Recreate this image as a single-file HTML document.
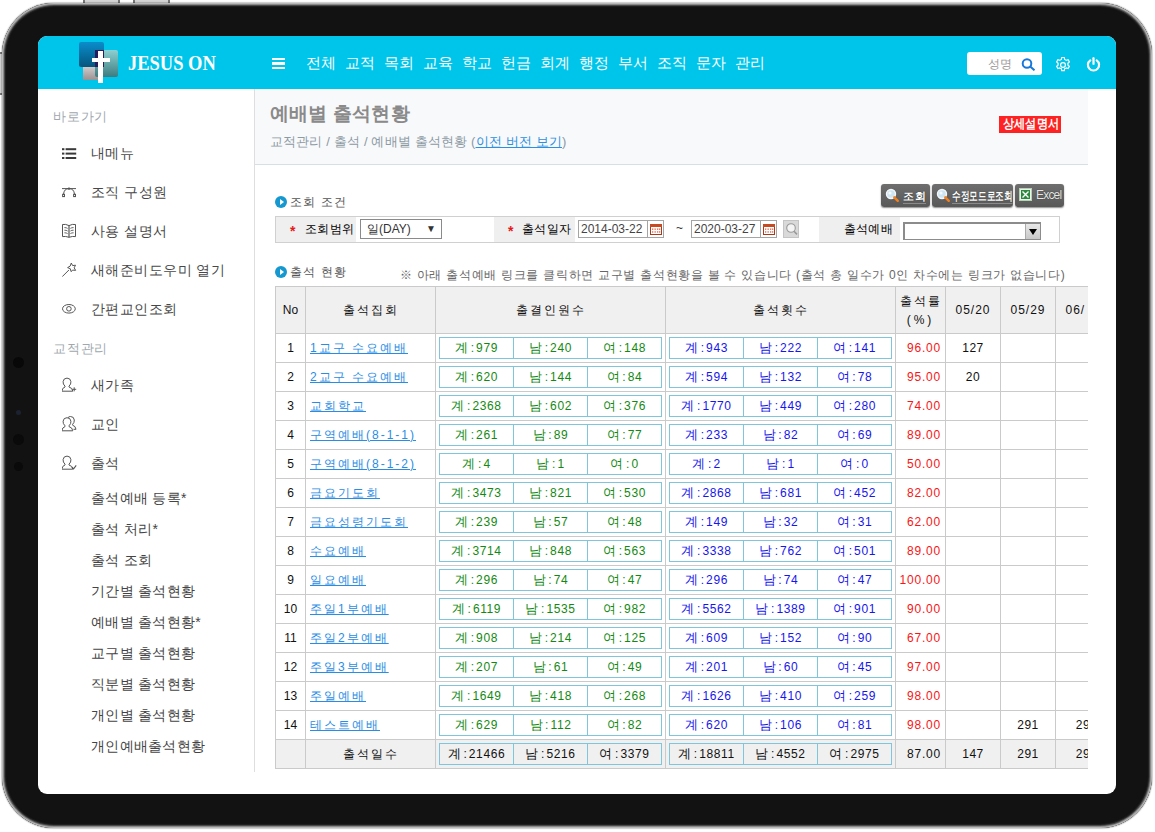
<!DOCTYPE html>
<html><head><meta charset="utf-8">
<style>
*{box-sizing:border-box}
html,body{margin:0;padding:0}
body{width:1155px;height:832px;overflow:hidden;background:#fff;position:relative;font-family:"Liberation Sans",sans-serif}
.btn-out{position:absolute;background:linear-gradient(90deg,#777 0 2px,#d4d4d4 2px calc(100% - 2px),#777 calc(100% - 2px))}
.btn-out.v{background:linear-gradient(#777 0 2px,#d4d4d4 2px calc(100% - 2px),#777 calc(100% - 2px))}
.frame{position:absolute;left:2px;top:3px;width:1150px;height:825px;border-radius:52px;background:#121212;box-shadow:0 0 1px 0.5px rgba(0,0,0,.2), inset 0 0 0 1px #b8b8b8, inset 0 0 0 2px #8a8a8a, inset 0 0 0 3px #4a4a4a, inset 0 0 1px 4px #222}
.screen{position:absolute;left:38px;top:36px;width:1078px;height:758px;border-radius:9px;overflow:hidden;background:#fff}
.nav{position:absolute;left:0;top:0;width:1078px;height:53px;background:#00c5ea}
.logo .sq{position:absolute}
.brand{position:absolute;left:90px;top:14px;font-family:"Liberation Serif",serif;color:#fff;font-size:22px;font-weight:bold;letter-spacing:0px;white-space:nowrap;transform-origin:0 0;transform:scaleX(0.84)}
.hamb{position:absolute;left:234px;top:22px;width:13px;height:11px}
.hamb i{position:absolute;left:0;width:13px;height:2.4px;background:#fff}
.menu span{position:absolute;top:17px;color:#fff;font-size:14.5px;white-space:nowrap;line-height:20px}
.sbox{position:absolute;left:929px;top:16px;width:75px;height:23px;background:#fff;border-radius:3px}
.sbox .ph{position:absolute;left:21px;top:4px;font-size:12px;color:#999}
.side{position:absolute;left:0;top:53px;width:217px;height:683px;border-right:1px solid #dedede}
.sh{position:absolute;left:15px;margin-top:1.5px;font-size:13px;color:#a0a8ae;white-space:nowrap;line-height:16px;letter-spacing:0.8px}
.si{position:absolute;left:0;height:20px;white-space:nowrap}
.si .ico{position:absolute;left:24px;top:2px;width:16px;height:16px;line-height:0}
.si .st{position:absolute;left:53px;top:0;font-size:14px;line-height:20px;color:#484848;letter-spacing:0.45px}
.ss{position:absolute;left:53px;font-size:14px;line-height:18px;color:#444;white-space:nowrap;letter-spacing:0.3px}
.content{position:absolute;left:217px;top:53px;width:833px;height:705px;overflow:hidden}
.phead{position:absolute;left:0;top:0;width:833px;height:76px;background:#f8f9fb;border-bottom:1px solid #d5e0e6}
.ptitle{position:absolute;left:15px;top:12px;font-size:19px;font-weight:bold;color:#8a8a8a;white-space:nowrap;letter-spacing:0.2px}
.bread{position:absolute;left:15px;top:44px;font-size:13px;color:#8c9aa3;white-space:nowrap;letter-spacing:0.15px}
.bread a{color:#2d8fe0;text-decoration:underline}
.badge{position:absolute;left:744px;top:27px;width:62px;height:17px;background:#fe2222;color:#fff;font-weight:bold;font-size:12.5px;line-height:17px;white-space:nowrap;overflow:hidden}
.badge span{position:absolute;left:4px;top:0;transform-origin:0 0;transform:scaleX(0.86)}
.sec{position:absolute;left:20px;font-size:12px;color:#555;white-space:nowrap;letter-spacing:0.5px;word-spacing:2.5px}
.sec .dot{position:absolute;left:0;top:1px;width:12px;height:12px;border-radius:50%;background:#1598d0}
.sec .dot:after{content:"";position:absolute;left:4.5px;top:3px;border-left:4px solid #fff;border-top:3px solid transparent;border-bottom:3px solid transparent}
.sec span.t{position:absolute;left:15px;top:0;line-height:14px}
.gbtn{position:absolute;top:95px;height:23px;border-radius:3px;background:linear-gradient(#6e6e6e,#585858);box-shadow:0 1px 1.5px rgba(0,0,0,.45);color:#fff;white-space:nowrap}
.gbtn .bt{position:absolute;top:5px;font-size:12px;line-height:14px;font-weight:bold;text-shadow:0 0 1px #222;border-bottom:1px solid #8a8a8a}
.star{position:absolute;top:1.5px;color:#e41a1a;font-weight:bold;font-size:14px}
.stbl{position:absolute;left:20px;top:127px;width:785px;height:27px;border:1px solid #d0d0d0;background:#fff}
.stbl .lb{position:absolute;top:0;height:25px;background:#efefef;font-size:12px;color:#000;line-height:25px;white-space:nowrap}
.inp{position:absolute;border:1px solid #a5a5a5;background:#fff;font-size:12px;color:#333;white-space:nowrap}
.note{position:absolute;left:145px;top:178px;font-size:12px;color:#666;white-space:nowrap;letter-spacing:0.7px;word-spacing:0px}
table.main{position:absolute;left:20px;top:197px;border-collapse:collapse;table-layout:fixed;width:805px}
table.main td,table.main th{border:1px solid #cacaca;padding:0;height:29px;font-size:12px;color:#111;text-align:center;white-space:nowrap;overflow:hidden}
table.main th{background:#f0f0f0;font-weight:normal;height:47px;letter-spacing:2px}
table.main td.nm{text-align:left;padding-left:4px;letter-spacing:2px}
table.main td.nm a{color:#2a8de4;text-decoration:underline}
table.main td.rt{color:#fa1414;text-align:right;padding-right:4px;letter-spacing:0.8px}
table.main td.rt2{text-align:right;padding-right:4px;letter-spacing:0.8px}
table.main td.bx{padding:0 3px}
table.main td.d{letter-spacing:0.5px}
table.main tr.tot td{background:#f0f0f0}
table.main td.nm2{letter-spacing:2px}
table.in{border-collapse:collapse;width:223px;table-layout:fixed;margin:0 auto}
table.in td{border:1px solid #7fc6dc;height:21px;font-size:12px;background:#fff;letter-spacing:0.6px;padding:0}
table.in b{font-weight:normal;font-size:13px}
table.in i{font-style:normal;margin:0 1.5px 0 2px}
table.in.g td{color:#128a12}
table.in.b td{color:#1616ee}
table.in.k td{color:#111;background:#f0f0f0}
</style></head><body>
<div class="btn-out" style="left:83px;top:0;width:37px;height:3px"></div>
<div class="btn-out" style="left:133px;top:0;width:37px;height:3px"></div>
<div class="btn-out v" style="left:0;top:52px;width:3px;height:43px"></div>
<div class="frame"></div>
<div style="position:absolute;left:13px;top:357px;width:11px;height:11px;border-radius:50%;background:#080808"></div>
<div style="position:absolute;left:16px;top:410px;width:5px;height:5px;border-radius:50%;background:#1c2330"></div>
<div style="position:absolute;left:13px;top:434px;width:11px;height:11px;border-radius:50%;background:#0a0a0a"></div>
<div style="position:absolute;left:14px;top:462px;width:9px;height:9px;border-radius:50%;background:#0a0a0a"></div>
<div class="screen">
 <div class="nav">
  <div class="logo">
   <div class="sq" style="left:41px;top:6px;width:25px;height:25px;border-radius:2px;background:linear-gradient(#0a8dcc,#05557c)"></div>
   <div class="sq" style="left:45px;top:31px;width:16px;height:13px;background:linear-gradient(#cfc9c9,#9a9292)"></div>
   <div class="sq" style="left:57px;top:14px;width:23px;height:27px;border-radius:2px;background:linear-gradient(#8ed0d2,#3c7c80)"></div>
   <div class="sq" style="left:57px;top:14px;width:9px;height:17px;background:#2a1c5c"></div>
   <div class="sq" style="left:60px;top:15px;width:5px;height:32px;background:#fff"></div>
   <div class="sq" style="left:54px;top:22px;width:18px;height:4px;background:#fff"></div>
  </div>
  <div class="brand">JESUS ON</div>
  <div class="hamb"><i style="top:0"></i><i style="top:4.3px"></i><i style="top:8.6px"></i></div>
  <div class="menu"><span style="left:268px">전체</span><span style="left:307px">교적</span><span style="left:346px">목회</span><span style="left:385px">교육</span><span style="left:424px">학교</span><span style="left:463px">헌금</span><span style="left:502px">회계</span><span style="left:541px">행정</span><span style="left:580px">부서</span><span style="left:619px">조직</span><span style="left:658px">문자</span><span style="left:697px">관리</span></div>
  <div class="sbox"><span class="ph">성명</span>
   <svg style="position:absolute;left:54px;top:6px" width="15" height="13" viewBox="0 0 15 13" fill="none" stroke="#1878da" stroke-width="2"><circle cx="6" cy="5.5" r="4.3"/><path d="M9.2 8.6 L13.5 12.3"/></svg>
  </div>
  <svg style="position:absolute;left:1015.5px;top:19.5px" width="18" height="18" viewBox="0 0 24 24" fill="none" stroke="#fff" stroke-width="1.6"><path d="M10.3 2 h3.4 l.5 2.6 a8 8 0 0 1 2.1 1.2 l2.5-.9 1.7 2.9 -2 1.8 a8 8 0 0 1 0 2.4 l2 1.8 -1.7 2.9 -2.5-.9 a8 8 0 0 1 -2.1 1.2 l-.5 2.6 h-3.4 l-.5-2.6 a8 8 0 0 1 -2.1-1.2 l-2.5.9 -1.7-2.9 2-1.8 a8 8 0 0 1 0-2.4 l-2-1.8 1.7-2.9 2.5.9 a8 8 0 0 1 2.1-1.2 z"/><circle cx="12" cy="12" r="3.2"/></svg>
  <svg style="position:absolute;left:1048px;top:21px" width="15" height="15" viewBox="0 0 15 15" fill="none" stroke="#fff" stroke-width="2.2" stroke-linecap="round"><path d="M4.3 3.3 A5.6 5.6 0 1 0 10.7 3.3"/><path d="M7.5 1.2 V7"/></svg>
 </div>
 <div class="side"><div class="sh" style="top:18px">바로가기</div>
<div class="si" style="top:54px"><span class="ico"><svg width="16" height="16" viewBox="0 0 16 16"><g fill="#3a3a3a"><rect x="0" y="3.2" width="2.4" height="2"/><rect x="3.6" y="3.2" width="10.6" height="2"/><rect x="0" y="7.6" width="2.4" height="2"/><rect x="3.6" y="7.6" width="10.6" height="2"/><rect x="0" y="12" width="2.4" height="2"/><rect x="3.6" y="12" width="10.6" height="2"/></g></svg></span><span class="st">내메뉴</span></div>
<div class="si" style="top:93px"><span class="ico"><svg width="16" height="16" viewBox="0 0 16 16" fill="none" stroke="#555" stroke-width="1"><path d="M0 4.6 H14"/><path d="M1.5 10.3 Q2 4.6 7 4.6 Q12 4.6 12.5 10.3"/><rect x="0.6" y="10.3" width="1.9" height="2.3" fill="#fff"/><rect x="11.6" y="10.3" width="1.9" height="2.3" fill="#fff"/><circle cx="7" cy="4.6" r="0.8" fill="#555"/></svg></span><span class="st">조직 구성원</span></div>
<div class="si" style="top:132px"><span class="ico"><svg width="16" height="16" viewBox="0 0 16 16" fill="none" stroke="#555" stroke-width="1"><path d="M0.5 1.5 Q3.5 0.8 7 2.6 Q10.5 0.8 13.5 1.5 V13.6 Q10.5 13 7 14.3 Q3.5 13 0.5 13.6 Z"/><path d="M7 2.6 V14.3" stroke-width="1.2"/><path d="M2.4 4.6 Q4.3 4.5 5.6 5.4 M2.4 7.2 Q4.3 7.1 5.6 8 M2.4 9.8 Q4.3 9.7 5.6 10.6 M11.6 4.6 Q9.7 4.5 8.4 5.4 M11.6 7.2 Q9.7 7.1 8.4 8 M11.6 9.8 Q9.7 9.7 8.4 10.6" stroke-width="0.9"/></svg></span><span class="st">사용 설명서</span></div>
<div class="si" style="top:171px"><span class="ico"><svg width="16" height="16" viewBox="0 0 16 16" fill="none" stroke="#555" stroke-width="1"><path d="M0.3 14.6 L7 7.9"/><path d="M9.3 1 L10.6 3.6 L13.5 3.2 L12.2 5.8 L13.6 8.4 L10.8 8.1 L9 9.6 L8.4 6.8 L5.6 5.6 L8.2 4.1 Z" stroke-linejoin="round"/></svg></span><span class="st">새해준비도우미 열기</span></div>
<div class="si" style="top:210px"><span class="ico"><svg width="16" height="16" viewBox="0 0 16 16" fill="none" stroke="#555" stroke-width="1"><ellipse cx="6.9" cy="7.8" rx="6.4" ry="4.3"/><circle cx="6.9" cy="7.8" r="2.3"/></svg></span><span class="st">간편교인조회</span></div>
<div class="sh" style="top:250px">교적관리</div>
<div class="si" style="top:286px"><span class="ico"><svg width="16" height="16" viewBox="0 0 16 16" fill="none" stroke="#555" stroke-width="1"><path d="M3 9.2 Q0.8 7.2 1.1 4.6 Q1.5 1.1 5 1.1 Q8.5 1.1 8.9 4.6 Q9.2 7.2 7 9.2 L7 10 Q10.3 10.7 10.8 14.2 H-0.2 Q0.3 10.7 3 10 Z" fill="#fff"/><path d="M10.2 12.3 H14.2 M12.2 10.3 V14.3"/></svg></span><span class="st">새가족</span></div>
<div class="si" style="top:325px"><span class="ico"><svg width="16" height="16" viewBox="0 0 16 16" fill="none" stroke="#555" stroke-width="1"><path d="M6 1.7 Q6.8 0.5 8.5 0.5 Q12 0.5 12.3 4 Q12.5 6.6 10.6 8.4 L10.6 9.2 Q13.6 10 14 13.3 H11.5"/><g transform="translate(0 0.6)"><path d="M3 9.2 Q0.8 7.2 1.1 4.6 Q1.5 1.1 5 1.1 Q8.5 1.1 8.9 4.6 Q9.2 7.2 7 9.2 L7 10 Q10.3 10.7 10.8 14.2 H-0.2 Q0.3 10.7 3 10 Z" fill="#fff"/></g></svg></span><span class="st">교인</span></div>
<div class="si" style="top:364px"><span class="ico"><svg width="16" height="16" viewBox="0 0 16 16" fill="none" stroke="#555" stroke-width="1"><path d="M3 9.2 Q0.8 7.2 1.1 4.6 Q1.5 1.1 5 1.1 Q8.5 1.1 8.9 4.6 Q9.2 7.2 7 9.2 L7 10 Q10.3 10.7 10.8 14.2 H-0.2 Q0.3 10.7 3 10 Z" fill="#fff"/><path d="M10 12 L11.6 13.8 L14.2 10.3" stroke-width="1.1"/></svg></span><span class="st">출석</span></div>
<div class="ss" style="top:400px">출석예배 등록*</div>
<div class="ss" style="top:431px">출석 처리*</div>
<div class="ss" style="top:462px">출석 조회</div>
<div class="ss" style="top:493px">기간별 출석현황</div>
<div class="ss" style="top:524px">예배별 출석현황*</div>
<div class="ss" style="top:555px">교구별 출석현황</div>
<div class="ss" style="top:586px">직분별 출석현황</div>
<div class="ss" style="top:617px">개인별 출석현황</div>
<div class="ss" style="top:648px">개인예배출석현황</div></div>
 <div class="content">
  <div class="phead">
   <div class="ptitle">예배별 출석현황</div>
   <div class="bread">교적관리 / 출석 / 예배별 출석현황 (<a>이전 버전 보기</a>)</div>
   <div class="badge"><span>상세설명서</span></div>
  </div>
  <div class="sec" style="top:106px"><span class="dot"></span><span class="t">조회 조건</span></div>
  <div class="gbtn" style="left:626px;width:49px"><svg style="position:absolute;left:4px;top:4px" width="15" height="15" viewBox="0 0 15 15"><circle cx="6" cy="6" r="4.5" fill="#cfe6f2" stroke="#f4f8fa" stroke-width="1.4"/><circle cx="5" cy="5" r="1.6" fill="#fff" opacity=".8"/><path d="M9.3 9.3 L12.8 12.8" stroke="#f07f1e" stroke-width="2.4" stroke-linecap="round"/></svg><span class="bt" style="left:22px;font-size:11px;letter-spacing:0.5px">조회</span></div>
  <div class="gbtn" style="left:677px;width:81px"><svg style="position:absolute;left:4px;top:4px" width="15" height="15" viewBox="0 0 15 15"><circle cx="6" cy="6" r="4.5" fill="#cfe6f2" stroke="#f4f8fa" stroke-width="1.4"/><circle cx="5" cy="5" r="1.6" fill="#fff" opacity=".8"/><path d="M9.3 9.3 L12.8 12.8" stroke="#f07f1e" stroke-width="2.4" stroke-linecap="round"/></svg><span class="bt" style="left:20px;transform-origin:0 0;transform:scaleX(0.72)">수정모드로조회</span></div>
  <div class="gbtn" style="left:760px;width:49px"><svg style="position:absolute;left:4px;top:4px" width="13" height="13" viewBox="0 0 13 13"><rect x="0.5" y="0.5" width="12" height="12" fill="#eef3ee" stroke="#b8d0b8"/><rect x="2" y="2" width="9" height="9" fill="#2c8a3c"/><path d="M3.5 3.5 L9.5 9.5 M9.5 3.5 L3.5 9.5" stroke="#fff" stroke-width="1.4"/></svg><span class="bt" style="left:21px;color:#e6e6e6;font-weight:normal;letter-spacing:-0.8px;border-bottom:0;top:4px">Excel</span></div>
  <div class="stbl">
   <div class="lb" style="left:0;width:80px"><span class="star" style="left:14px">*</span><span style="position:absolute;left:29px;letter-spacing:0.3px">조회범위</span></div>
   <div class="inp" style="left:84px;top:2px;width:82px;height:20px;line-height:18px;padding-left:6px;border-color:#8a8a8a;letter-spacing:0px">일(DAY)<span style="position:absolute;right:5px;top:0px;font-size:10px">&#9660;</span></div>
   <div class="lb" style="left:218px;width:81px"><span class="star" style="left:14px">*</span><span style="position:absolute;left:28px;letter-spacing:0.3px">출석일자</span></div>
   <div class="inp" style="left:302px;top:3px;width:70px;height:18px;line-height:16px;padding-left:2px;color:#444">2014-03-22</div>
   <div class="inp" style="left:371px;top:3px;width:17px;height:18px"><svg style="position:absolute;left:2px;top:3px" width="12" height="11" viewBox="0 0 12 11"><rect x="0.5" y="0.5" width="11" height="10" fill="#fff" stroke="#a83a1a"/><rect x="0" y="0" width="12" height="3" fill="#c84a22"/><g fill="#e85a3a"><rect x="2" y="4.5" width="1.3" height="1.3"/><rect x="4.5" y="4.5" width="1.3" height="1.3"/><rect x="7" y="4.5" width="1.3" height="1.3"/><rect x="9" y="4.5" width="1.3" height="1.3"/><rect x="2" y="7.3" width="1.3" height="1.3"/><rect x="4.5" y="7.3" width="1.3" height="1.3"/><rect x="7" y="7.3" width="1.3" height="1.3"/><rect x="9" y="7.3" width="1.3" height="1.3"/></g></svg></div>
   <div style="position:absolute;left:400px;top:4px;font-size:12px;color:#333">~</div>
   <div class="inp" style="left:415px;top:3px;width:70px;height:18px;line-height:16px;padding-left:2px;color:#444">2020-03-27</div>
   <div class="inp" style="left:484px;top:3px;width:17px;height:18px"><svg style="position:absolute;left:2px;top:3px" width="12" height="11" viewBox="0 0 12 11"><rect x="0.5" y="0.5" width="11" height="10" fill="#fff" stroke="#a83a1a"/><rect x="0" y="0" width="12" height="3" fill="#c84a22"/><g fill="#e85a3a"><rect x="2" y="4.5" width="1.3" height="1.3"/><rect x="4.5" y="4.5" width="1.3" height="1.3"/><rect x="7" y="4.5" width="1.3" height="1.3"/><rect x="9" y="4.5" width="1.3" height="1.3"/><rect x="2" y="7.3" width="1.3" height="1.3"/><rect x="4.5" y="7.3" width="1.3" height="1.3"/><rect x="7" y="7.3" width="1.3" height="1.3"/><rect x="9" y="7.3" width="1.3" height="1.3"/></g></svg></div>
   <div class="inp" style="left:507px;top:3px;width:16px;height:18px;background:#d9d9d9;border-color:#c4c4c4"><svg style="position:absolute;left:1px;top:1px" width="13" height="14" viewBox="0 0 13 14" fill="none"><circle cx="6" cy="6" r="4.3" fill="#f4f4f4" stroke="#9a9a9a" stroke-width="1.1"/><path d="M9 9.2 L12 12.4" stroke="#9a9a9a" stroke-width="1.6"/></svg></div>
   <div class="lb" style="left:543px;width:81px;text-align:right;padding-right:7px;letter-spacing:0.3px">출석예배</div>
   <div class="inp" style="left:627px;top:5px;width:138px;height:18px;border:2px solid #8c8c8c;border-right-width:1px;border-bottom-width:1px"><span style="position:absolute;right:0;top:0;width:15px;height:15px;background:linear-gradient(#e8e8e8,#c8c8c8);border-left:1px solid #aaa"><span style="position:absolute;left:3px;top:5px;border-top:6px solid #000;border-left:4.5px solid transparent;border-right:4.5px solid transparent"></span></span></div>
  </div>
  <div class="sec" style="top:176px"><span class="dot"></span><span class="t">출석 현황</span></div>
  <div class="note">※ 아래 출석예배 링크를 클릭하면 교구별 출석현황을 볼 수 있습니다 (출석 총 일수가 0인 차수에는 링크가 없습니다)</div>
  <table class="main">
   <colgroup><col style="width:30px"><col style="width:130px"><col style="width:230px"><col style="width:230px"><col style="width:50px"><col style="width:55px"><col style="width:55px"><col style="width:55px"></colgroup>
   <tr><th style="letter-spacing:0">No</th><th>출석집회</th><th>출결인원수</th><th>출석횟수</th><th style="line-height:19px;padding-top:2px">출석률<br><span style="letter-spacing:3px">(%)</span></th><th style="letter-spacing:1px">05/20</th><th style="letter-spacing:1px">05/29</th><th style="letter-spacing:1px">06/<span style="visibility:hidden">05</span></th></tr>
<tr><td class="no">1</td><td class="nm"><a>1교구 수요예배</a></td><td class="bx"><table class="in g"><tr><td><b>계</b><i>:</i>979</td><td><b>남</b><i>:</i>240</td><td><b>여</b><i>:</i>148</td></tr></table></td><td class="bx"><table class="in b"><tr><td><b>계</b><i>:</i>943</td><td><b>남</b><i>:</i>222</td><td><b>여</b><i>:</i>141</td></tr></table></td><td class="rt">96.00</td><td class="d">127</td><td class="d"></td><td class="d"></td></tr>
<tr><td class="no">2</td><td class="nm"><a>2교구 수요예배</a></td><td class="bx"><table class="in g"><tr><td><b>계</b><i>:</i>620</td><td><b>남</b><i>:</i>144</td><td><b>여</b><i>:</i>84</td></tr></table></td><td class="bx"><table class="in b"><tr><td><b>계</b><i>:</i>594</td><td><b>남</b><i>:</i>132</td><td><b>여</b><i>:</i>78</td></tr></table></td><td class="rt">95.00</td><td class="d">20</td><td class="d"></td><td class="d"></td></tr>
<tr><td class="no">3</td><td class="nm"><a>교회학교</a></td><td class="bx"><table class="in g"><tr><td><b>계</b><i>:</i>2368</td><td><b>남</b><i>:</i>602</td><td><b>여</b><i>:</i>376</td></tr></table></td><td class="bx"><table class="in b"><tr><td><b>계</b><i>:</i>1770</td><td><b>남</b><i>:</i>449</td><td><b>여</b><i>:</i>280</td></tr></table></td><td class="rt">74.00</td><td class="d"></td><td class="d"></td><td class="d"></td></tr>
<tr><td class="no">4</td><td class="nm"><a>구역예배(8-1-1)</a></td><td class="bx"><table class="in g"><tr><td><b>계</b><i>:</i>261</td><td><b>남</b><i>:</i>89</td><td><b>여</b><i>:</i>77</td></tr></table></td><td class="bx"><table class="in b"><tr><td><b>계</b><i>:</i>233</td><td><b>남</b><i>:</i>82</td><td><b>여</b><i>:</i>69</td></tr></table></td><td class="rt">89.00</td><td class="d"></td><td class="d"></td><td class="d"></td></tr>
<tr><td class="no">5</td><td class="nm"><a>구역예배(8-1-2)</a></td><td class="bx"><table class="in g"><tr><td><b>계</b><i>:</i>4</td><td><b>남</b><i>:</i>1</td><td><b>여</b><i>:</i>0</td></tr></table></td><td class="bx"><table class="in b"><tr><td><b>계</b><i>:</i>2</td><td><b>남</b><i>:</i>1</td><td><b>여</b><i>:</i>0</td></tr></table></td><td class="rt">50.00</td><td class="d"></td><td class="d"></td><td class="d"></td></tr>
<tr><td class="no">6</td><td class="nm"><a>금요기도회</a></td><td class="bx"><table class="in g"><tr><td><b>계</b><i>:</i>3473</td><td><b>남</b><i>:</i>821</td><td><b>여</b><i>:</i>530</td></tr></table></td><td class="bx"><table class="in b"><tr><td><b>계</b><i>:</i>2868</td><td><b>남</b><i>:</i>681</td><td><b>여</b><i>:</i>452</td></tr></table></td><td class="rt">82.00</td><td class="d"></td><td class="d"></td><td class="d"></td></tr>
<tr><td class="no">7</td><td class="nm"><a>금요성령기도회</a></td><td class="bx"><table class="in g"><tr><td><b>계</b><i>:</i>239</td><td><b>남</b><i>:</i>57</td><td><b>여</b><i>:</i>48</td></tr></table></td><td class="bx"><table class="in b"><tr><td><b>계</b><i>:</i>149</td><td><b>남</b><i>:</i>32</td><td><b>여</b><i>:</i>31</td></tr></table></td><td class="rt">62.00</td><td class="d"></td><td class="d"></td><td class="d"></td></tr>
<tr><td class="no">8</td><td class="nm"><a>수요예배</a></td><td class="bx"><table class="in g"><tr><td><b>계</b><i>:</i>3714</td><td><b>남</b><i>:</i>848</td><td><b>여</b><i>:</i>563</td></tr></table></td><td class="bx"><table class="in b"><tr><td><b>계</b><i>:</i>3338</td><td><b>남</b><i>:</i>762</td><td><b>여</b><i>:</i>501</td></tr></table></td><td class="rt">89.00</td><td class="d"></td><td class="d"></td><td class="d"></td></tr>
<tr><td class="no">9</td><td class="nm"><a>일요예배</a></td><td class="bx"><table class="in g"><tr><td><b>계</b><i>:</i>296</td><td><b>남</b><i>:</i>74</td><td><b>여</b><i>:</i>47</td></tr></table></td><td class="bx"><table class="in b"><tr><td><b>계</b><i>:</i>296</td><td><b>남</b><i>:</i>74</td><td><b>여</b><i>:</i>47</td></tr></table></td><td class="rt">100.00</td><td class="d"></td><td class="d"></td><td class="d"></td></tr>
<tr><td class="no">10</td><td class="nm"><a>주일1부예배</a></td><td class="bx"><table class="in g"><tr><td><b>계</b><i>:</i>6119</td><td><b>남</b><i>:</i>1535</td><td><b>여</b><i>:</i>982</td></tr></table></td><td class="bx"><table class="in b"><tr><td><b>계</b><i>:</i>5562</td><td><b>남</b><i>:</i>1389</td><td><b>여</b><i>:</i>901</td></tr></table></td><td class="rt">90.00</td><td class="d"></td><td class="d"></td><td class="d"></td></tr>
<tr><td class="no">11</td><td class="nm"><a>주일2부예배</a></td><td class="bx"><table class="in g"><tr><td><b>계</b><i>:</i>908</td><td><b>남</b><i>:</i>214</td><td><b>여</b><i>:</i>125</td></tr></table></td><td class="bx"><table class="in b"><tr><td><b>계</b><i>:</i>609</td><td><b>남</b><i>:</i>152</td><td><b>여</b><i>:</i>90</td></tr></table></td><td class="rt">67.00</td><td class="d"></td><td class="d"></td><td class="d"></td></tr>
<tr><td class="no">12</td><td class="nm"><a>주일3부예배</a></td><td class="bx"><table class="in g"><tr><td><b>계</b><i>:</i>207</td><td><b>남</b><i>:</i>61</td><td><b>여</b><i>:</i>49</td></tr></table></td><td class="bx"><table class="in b"><tr><td><b>계</b><i>:</i>201</td><td><b>남</b><i>:</i>60</td><td><b>여</b><i>:</i>45</td></tr></table></td><td class="rt">97.00</td><td class="d"></td><td class="d"></td><td class="d"></td></tr>
<tr><td class="no">13</td><td class="nm"><a>주일예배</a></td><td class="bx"><table class="in g"><tr><td><b>계</b><i>:</i>1649</td><td><b>남</b><i>:</i>418</td><td><b>여</b><i>:</i>268</td></tr></table></td><td class="bx"><table class="in b"><tr><td><b>계</b><i>:</i>1626</td><td><b>남</b><i>:</i>410</td><td><b>여</b><i>:</i>259</td></tr></table></td><td class="rt">98.00</td><td class="d"></td><td class="d"></td><td class="d"></td></tr>
<tr><td class="no">14</td><td class="nm"><a>테스트예배</a></td><td class="bx"><table class="in g"><tr><td><b>계</b><i>:</i>629</td><td><b>남</b><i>:</i>112</td><td><b>여</b><i>:</i>82</td></tr></table></td><td class="bx"><table class="in b"><tr><td><b>계</b><i>:</i>620</td><td><b>남</b><i>:</i>106</td><td><b>여</b><i>:</i>81</td></tr></table></td><td class="rt">98.00</td><td class="d"></td><td class="d">291</td><td class="d">29</td></tr>
<tr class="tot"><td class="no"></td><td class="nm2">출석일수</td><td class="bx"><table class="in k"><tr><td><b>계</b><i>:</i>21466</td><td><b>남</b><i>:</i>5216</td><td><b>여</b><i>:</i>3379</td></tr></table></td><td class="bx"><table class="in k"><tr><td><b>계</b><i>:</i>18811</td><td><b>남</b><i>:</i>4552</td><td><b>여</b><i>:</i>2975</td></tr></table></td><td class="rt2">87.00</td><td class="d">147</td><td class="d">291</td><td class="d">29</td></tr>
  </table>
 </div>
</div>
</body></html>
